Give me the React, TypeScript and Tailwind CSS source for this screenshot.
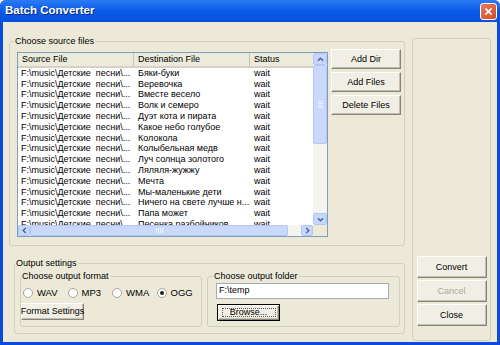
import type { ReactNode } from 'react';

const rows: string[] = [
  'Бяки-буки',
  'Веревочка',
  'Вместе весело',
  'Волк и семеро',
  'Дуэт кота и пирата',
  'Какое небо голубое',
  'Колокола',
  'Колыбельная медв',
  'Луч солнца золотого',
  'Ляляля-жужжу',
  'Мечта',
  'Мы-маленькие дети',
  'Ничего на свете лучше н...',
  'Папа может',
  'Песенка разбойников',
];

function Group({
  label,
  className,
  labelClass,
  children,
}: {
  label: string;
  className?: string;
  labelClass?: string;
  children?: ReactNode;
}) {
  return (
    <div className={`relative rounded-[3px] border border-[#D0D0BF] ${className ?? ''}`}>
      {label && (
        <span
          className={`absolute -top-[6px] bg-[#ECE9D8] px-[1px] text-[9px] leading-[11px] text-black ${
            labelClass ?? 'left-[4px]'
          }`}
        >
          {label}
        </span>
      )}
      {children}
    </div>
  );
}

function Button({
  children,
  className,
  disabled,
  focused,
}: {
  children: ReactNode;
  className?: string;
  disabled?: boolean;
  focused?: boolean;
}) {
  return (
    <div
      className={`whitespace-nowrap text-[9px] leading-none ${disabled ? 'text-[#ACA899]' : 'text-black'} ${
        focused ? 'border border-black' : ''
      } ${className ?? ''}`}
    >
      <div className="flex h-full w-full items-center justify-center border border-white border-r-[#85847C] border-b-[#85847C] bg-[#F1EFE5] shadow-[inset_-1px_-1px_0_#C3BFAE]">
        {focused ? (
          <span className="flex h-[calc(100%-4px)] w-[calc(100%-5px)] items-center justify-center border border-dotted border-[#555]">
            {children}
          </span>
        ) : (
          children
        )}
      </div>
    </div>
  );
}

function Radio({ label, checked }: { label: string; checked?: boolean }) {
  return (
    <div className="flex w-[46px] items-center gap-[4px]">
      <span className="flex h-[10px] w-[10px] items-center justify-center rounded-full border border-[#A8A698] bg-white">
        {checked && <span className="h-[4px] w-[4px] rounded-full bg-[#222]" />}
      </span>
      <span className="text-[9.5px] leading-none">{label}</span>
    </div>
  );
}

function Arrow({ dir }: { dir: 'up' | 'down' | 'left' | 'right' }) {
  const rot = { up: 'rotate-0', down: 'rotate-180', left: '-rotate-90', right: 'rotate-90' }[dir];
  return (
    <svg viewBox="0 0 8 8" className={`h-[7px] w-[7px] ${rot}`}>
      <path d="M1 5.5 L4 2.5 L7 5.5" fill="none" stroke="#4D6185" strokeWidth="1.6" />
    </svg>
  );
}

function ScrollButton({ dir, className }: { dir: 'up' | 'down' | 'left' | 'right'; className: string }) {
  return (
    <div className={`flex items-center justify-center rounded-[2px] border border-[#B4C8F6] bg-[#C6D6FC] ${className}`}>
      <Arrow dir={dir} />
    </div>
  );
}

function Grip({ vertical }: { vertical?: boolean }) {
  return (
    <div className={`flex ${vertical ? 'flex-col' : 'flex-row'} gap-[1px]`}>
      {[0, 1, 2, 3].map((i) => (
        <span key={i} className={`${vertical ? 'h-px w-[5px]' : 'h-[5px] w-px'} bg-[#EEF4FE]`} />
      ))}
    </div>
  );
}

function ListView() {
  return (
    <div className="flex h-[185px] w-[311px] flex-col border border-[#7F9DB9] bg-white text-[9px] text-black">
      <div className="flex min-h-0 flex-1">
        <div className="flex min-w-0 flex-1 flex-col overflow-hidden">
          <div className="flex h-[15px] shrink-0 items-stretch border-b-2 border-[#D6D2C2] bg-[#EBEADB] leading-none">
            <div className="flex w-[116px] items-center border-r border-[#C7C5B2] pl-[4px]">Source File</div>
            <div className="flex w-[116px] items-center border-r border-[#C7C5B2] pl-[4px]">Destination File</div>
            <div className="flex flex-1 items-center pl-[4px]">Status</div>
          </div>
          <div className="flex flex-col">
            {rows.map((name) => (
              <div key={name} className="flex h-[10.8px] shrink-0 items-center leading-none">
                <div className="w-[116px] whitespace-pre pl-[3px]">F:\music\Детские  песни\...</div>
                <div className="w-[116px] whitespace-nowrap pl-[4px]">{name}</div>
                <div className="flex-1 pl-[4px]">wait</div>
              </div>
            ))}
          </div>
        </div>
        <div className="flex w-[14px] shrink-0 flex-col bg-[#F5F4EE]">
          <ScrollButton dir="up" className="h-[12px]" />
          <div className="flex h-[79px] items-center justify-center rounded-[2px] border border-[#B4C8F6] bg-[#C9D8FB]">
            <Grip vertical />
          </div>
          <div className="flex-1" />
          <ScrollButton dir="down" className="h-[12px]" />
        </div>
      </div>
      <div className="flex h-[11px] shrink-0">
        <div className="flex flex-1 bg-[#F5F4EE]">
          <ScrollButton dir="left" className="w-[12px]" />
          <div className="flex w-[258px] items-center justify-center rounded-[2px] border border-[#B4C8F6] bg-[#C9D8FB]">
            <Grip />
          </div>
          <div className="flex-1" />
          <ScrollButton dir="right" className="w-[12px]" />
        </div>
        <div className="w-[14px] bg-[#ECE9D8]" />
      </div>
    </div>
  );
}

export default function App() {
  return (
    <div
      className="flex h-[345px] w-[500px] flex-col overflow-hidden rounded-t-[6px] bg-[#0A4BDB]"
      style={{ fontFamily: '"Liberation Sans", Arial, sans-serif' }}
    >
      <div className="flex h-[22px] shrink-0 items-center justify-between bg-gradient-to-b from-[#2B7BF5] via-[#0A5AE8] to-[#0550DD] pl-[5px] pr-[3px]">
        <span className="text-[11.5px] font-bold text-white [text-shadow:1px_1px_0_#0A2A7A]">Batch Converter</span>
        <div className="flex h-[17px] w-[17px] items-center justify-center rounded-[3px] border border-white bg-gradient-to-br from-[#E87A58] to-[#D64A22]">
          <svg viewBox="0 0 10 10" className="h-[9px] w-[9px]">
            <path d="M1.5 1.5 L8.5 8.5 M8.5 1.5 L1.5 8.5" stroke="white" strokeWidth="1.8" />
          </svg>
        </div>
      </div>

      <div className="mx-[3px] mb-[3px] flex flex-1 bg-[#ECE9D8]">
        <div className="ml-[6px] flex w-[396px] flex-col">
          <Group label="Choose source files" labelClass="left-[4px]" className="mt-[19px] h-[205px] w-[396px]">
            <div className="flex gap-[3px] pl-[7px] pt-[7px]">
              <div className="mt-[3px]">
                <ListView />
              </div>
              <div className="flex flex-col gap-[3px]">
                <Button className="h-[20px] w-[70px]">Add Dir</Button>
                <Button className="h-[20px] w-[70px]">Add Files</Button>
                <Button className="h-[20px] w-[70px]">Delete Files</Button>
              </div>
            </div>
          </Group>

          <Group label="Output settings" labelClass="left-[0px]" className="ml-[5px] mt-[17px] h-[71px] w-[391px]">
            <div className="flex gap-[5px] pl-[5px] pt-[12px]">
              <Group label="Choose output format" labelClass="left-[0px]" className="h-[51px] w-[182px]">
                <div className="flex pl-[2px] pt-[11px]">
                  <Radio label="WAV" />
                  <Radio label="MP3" />
                  <Radio label="WMA" />
                  <Radio label="OGG" checked />
                </div>
                <Button className="mt-[5px] h-[17px] w-[63px] text-[8.5px]">Format Settings</Button>
              </Group>
              <Group label="Choose output folder" labelClass="left-[5px]" className="h-[51px] w-[193px]">
                <div className="ml-[8px] mt-[6px] flex h-[16px] w-[173px] items-center border border-[#A5ACB5] bg-white pl-[2px] text-[9px]">
                  F:\temp
                </div>
                <Button focused className="ml-[9px] mt-[5px] h-[17px] w-[63px]">
                  Browse...
                </Button>
              </Group>
            </div>
          </Group>
        </div>

        <Group label="" className="ml-[7px] mt-[16px] h-[303px] w-[79px]">
          <div className="flex flex-col items-center gap-[2px] pt-[217px]">
            <Button className="h-[22px] w-[70px]">Convert</Button>
            <Button disabled className="h-[22px] w-[70px]">
              Cancel
            </Button>
            <Button className="h-[22px] w-[70px]">Close</Button>
          </div>
        </Group>
      </div>
    </div>
  );
}
